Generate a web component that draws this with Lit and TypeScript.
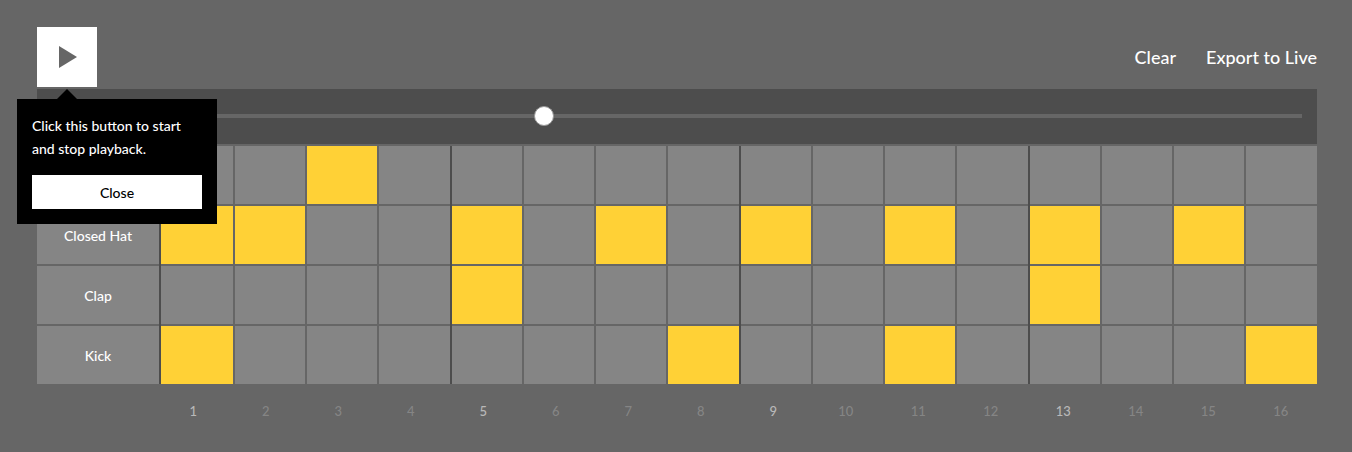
import { LitElement, html, css } from "lit";
import { customElement, state } from "lit/decorators.js";
import { classMap } from "lit/directives/class-map.js";

interface Track {
  name: string;
  steps: number[];
}

const STEPS = Array.from({ length: 16 }, (_, i) => i + 1);

@customElement("app-root")
class AppRoot extends LitElement {
  @state() private tracks: Track[] = [
    { name: "Open Hat", steps: [3] },
    { name: "Closed Hat", steps: [1, 2, 5, 7, 9, 11, 13, 15] },
    { name: "Clap", steps: [5, 13] },
    { name: "Kick", steps: [1, 8, 11, 16] },
  ];
  @state() private tipOpen = true;
  @state() private playing = false;

  static styles = css`
    * {
      box-sizing: border-box;
    }
    :host {
      display: block;
      min-height: 100vh;
      box-sizing: border-box;
      padding: 27px 35px 30px 37px;
      background: #666;
      color: #fff;
      font-family: "Futura PT", Futura, Lato, sans-serif;
      font-size: 14px;
      font-weight: 500;
    }
    button {
      margin: 0;
      padding: 0;
      border: 0;
      border-radius: 0;
      font: inherit;
      cursor: pointer;
    }
    .toolbar {
      display: flex;
      justify-content: space-between;
      align-items: center;
      margin-bottom: 2px;
    }
    .play-wrap {
      position: relative;
    }
    .play {
      display: grid;
      place-items: center;
      width: 60px;
      height: 60px;
      background: #fff;
    }
    .actions {
      display: flex;
      gap: 30px;
    }
    .action {
      background: none;
      color: #fff;
      font-size: 18px;
      line-height: 24px;
    }
    .tip {
      position: absolute;
      z-index: 1;
      top: 72px;
      left: -20px;
      width: 200px;
      padding: 15px;
      background: #000;
      line-height: 23px;
    }
    .tip::before {
      content: "";
      position: absolute;
      left: 40px;
      bottom: 100%;
      border: 10px solid transparent;
      border-top: 0;
      border-bottom-color: #000;
    }
    .tip-text {
      margin: 0 0 15px;
    }
    .close {
      display: block;
      width: 100%;
      height: 34px;
      background: #fff;
      color: #000;
    }
    .tempo {
      display: flex;
      align-items: center;
      margin-bottom: 2px;
      padding: 17px 15px 18px;
      background: #4d4d4d;
    }
    .slider {
      appearance: none;
      width: 100%;
      height: 20px;
      margin: 0;
      background: none;
    }
    .slider::-webkit-slider-runnable-track {
      height: 4px;
      background: #666;
    }
    .slider::-webkit-slider-thumb {
      appearance: none;
      width: 20px;
      height: 20px;
      margin-top: -8px;
      border: 1px solid #999;
      border-radius: 50%;
      background: #fff;
    }
    .row {
      display: grid;
      grid-template-columns: 124px minmax(0, 1fr);
      height: 60px;
    }
    .row:last-child {
      height: 58px;
    }
    .name {
      display: grid;
      place-items: center;
      padding-bottom: 2px;
      border-right: 2px solid #4d4d4d;
      background: #858585;
      box-shadow: inset 0 -2px #666;
    }
    .cells {
      display: grid;
      grid-template-columns: repeat(4, 72fr 72fr 72fr 73fr);
    }
    .cell {
      border-left: 2px solid #666;
      background: #858585;
      box-shadow: inset 0 -2px #666;
    }
    .cell.beat {
      border-left-color: #4d4d4d;
    }
    .cell:first-child {
      border-left: 0;
    }
    .cell.on {
      background-color: #ffd136;
    }
    .row:last-child .name,
    .row:last-child .cell {
      box-shadow: none;
    }
    .row:last-child .name {
      padding-bottom: 0;
    }
    .numbers {
      display: grid;
      grid-template-columns: repeat(16, minmax(0, 1fr));
      padding: 17px 0 0 120px;
      color: #858585;
      font-size: 13px;
      line-height: 20px;
      text-align: center;
    }
    .number.beat {
      color: #b8b8b8;
    }
  `;

  private toggle(row: number, step: number) {
    this.tracks = this.tracks.map((t, i) =>
      i !== row
        ? t
        : {
            ...t,
            steps: t.steps.includes(step)
              ? t.steps.filter((s) => s !== step)
              : [...t.steps, step],
          },
    );
  }

  private clear() {
    this.tracks = this.tracks.map((t) => ({ ...t, steps: [] }));
  }

  render() {
    return html`
      <div class="toolbar">
        <div class="play-wrap">
          <button
            class="play"
            aria-label="Play"
            aria-pressed=${this.playing}
            @click=${() => (this.playing = !this.playing)}
          >
            <svg width="20" height="22" viewBox="0 0 20 22" aria-hidden="true">
              <path d="M2 0 20 11 2 22Z" fill="#666" />
            </svg>
          </button>
          ${this.tipOpen
            ? html`<div class="tip" role="dialog" aria-label="Playback">
                <p class="tip-text">Click this button to start and stop playback.</p>
                <button class="close" @click=${() => (this.tipOpen = false)}>Close</button>
              </div>`
            : null}
        </div>
        <div class="actions">
          <button class="action" @click=${this.clear}>Clear</button>
          <button class="action">Export to Live</button>
        </div>
      </div>
      <div class="tempo">
        <input class="slider" type="range" aria-label="Tempo" min="60" max="180" value="107" />
      </div>
      <div class="tracks">
        ${this.tracks.map(
          (t, row) => html`<div class="row">
            <div class="name">${t.name}</div>
            <div class="cells">
              ${STEPS.map(
                (n) => html`<button
                  class=${classMap({ cell: true, beat: n % 4 === 1, on: t.steps.includes(n) })}
                  aria-label="${t.name} ${n}"
                  aria-pressed=${t.steps.includes(n)}
                  @click=${() => this.toggle(row, n)}
                ></button>`,
              )}
            </div>
          </div>`,
        )}
      </div>
      <div class="numbers">
        ${STEPS.map(
          (n) => html`<span class=${classMap({ number: true, beat: n % 4 === 1 })}>${n}</span>`,
        )}
      </div>
    `;
  }
}
